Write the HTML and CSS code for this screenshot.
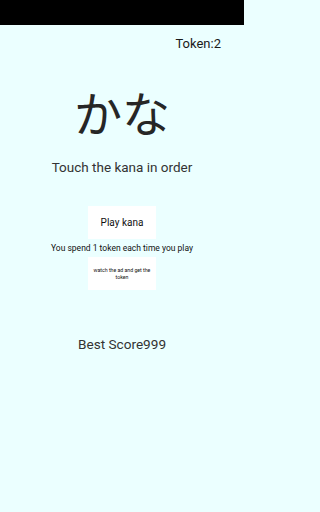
FILE: index.html
```html
<!DOCTYPE html>
<html>
<head>
<meta charset="utf-8">
<link rel="stylesheet" href="styles.css">
</head>
<body>
<div class="page">
  <div class="statusbar"></div>
  <main class="screen">
    <div class="token-row"><span class="token">Token:2</span></div>
    <h1 class="title">かな</h1>
    <p class="subtitle">Touch the kana in order</p>
    <button class="btn btn-play">Play kana</button>
    <p class="note">You spend 1 token each time you play</p>
    <button class="btn btn-ad">watch the ad and get the token</button>
    <p class="best">Best Score999</p>
  </main>
</div>
</body>
</html>
```
FILE: styles.css
```css
html, body {
  margin: 0;
  padding: 0;
  height: 100%;
}
body {
  background: #ebffff;
  font-family: Roboto, "Liberation Sans", "Noto Sans CJK JP", sans-serif;
  color: #222;
}
.page {
  width: 244px;
  min-height: 512px;
}
.statusbar {
  height: 25px;
  background: #000;
}
.screen {
  display: flex;
  flex-direction: column;
  align-items: center;
}
.token-row {
  align-self: stretch;
  display: flex;
  justify-content: flex-end;
  padding: 11px 23px 0 0;
}
.token {
  font-size: 13px;
  line-height: 16px;
  color: #1a1a1a;
}
.title {
  margin: 31px 0 0;
  font-family: "Noto Sans CJK JP", sans-serif;
  font-weight: 400;
  font-size: 48px;
  line-height: 56px;
  color: #262626;
}
.subtitle {
  margin: 20px 0 0;
  font-size: 13.5px;
  line-height: 16px;
  color: #333;
}
.btn {
  display: block;
  box-sizing: border-box;
  width: 68px;
  height: 33px;
  border: none;
  border-radius: 0;
  background: #fff;
  padding: 0 4px;
  font-family: Roboto, "Liberation Sans", sans-serif;
  color: #111;
}
.btn-play {
  margin-top: 31px;
  font-size: 10px;
}
.note {
  margin: 3px 0 0;
  font-size: 8.5px;
  line-height: 12px;
  color: #111;
}
.btn-ad {
  margin-top: 3px;
  font-size: 5.2px;
  line-height: 7px;
}
.best {
  margin: 46px 0 0;
  font-size: 13.6px;
  line-height: 16px;
  color: #333;
}
```
